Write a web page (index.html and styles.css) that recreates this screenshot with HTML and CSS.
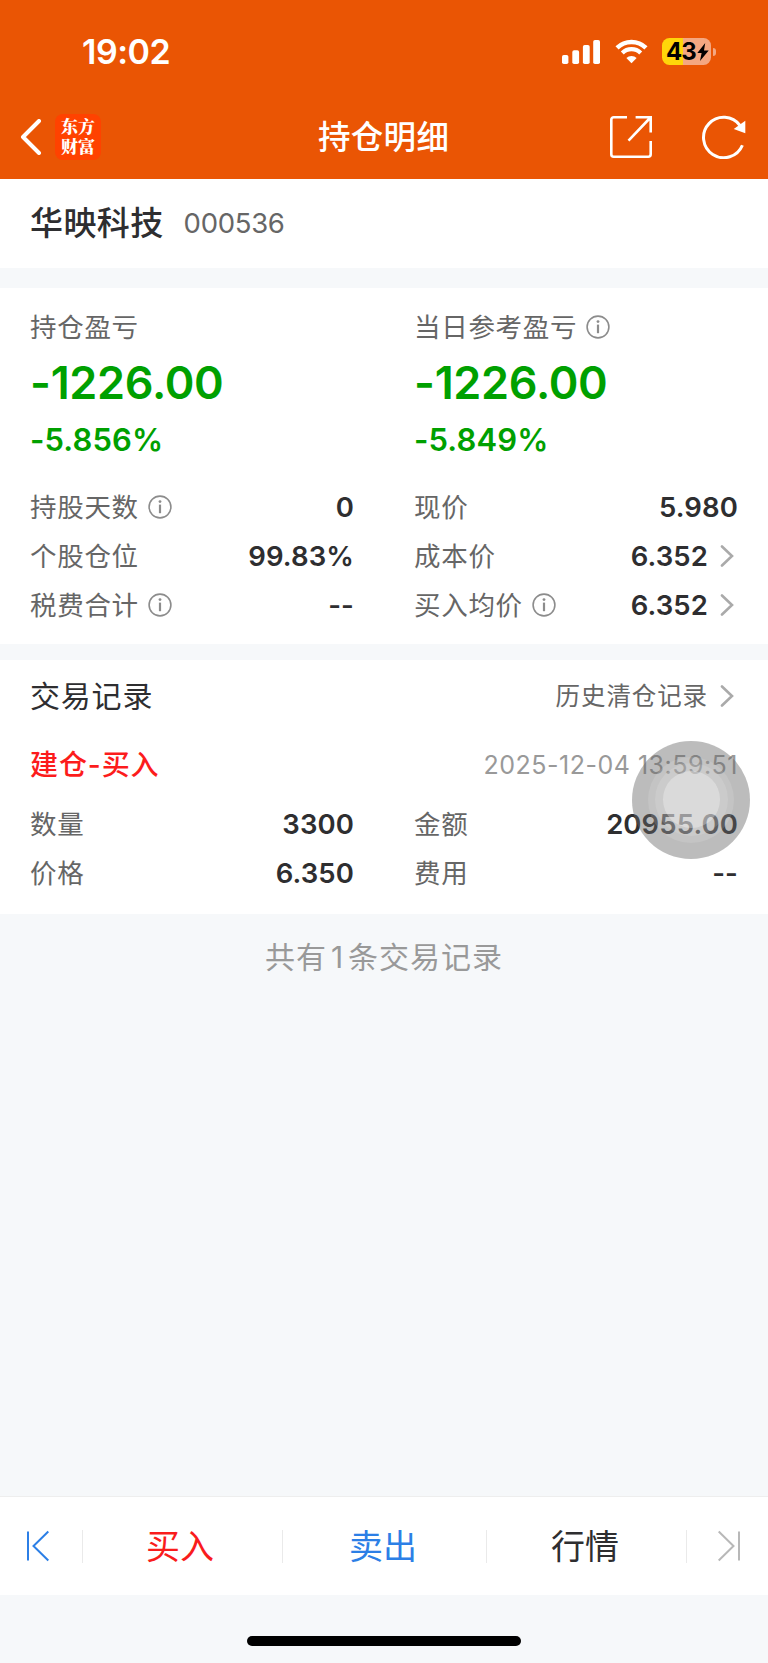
FILE: index.html
```html
<!DOCTYPE html>
<html lang="zh-CN">
<head>
<meta charset="utf-8">
<title>持仓明细</title>
<link rel="stylesheet" href="styles.css">
</head>
<body>
<svg class="defs" aria-hidden="true">
  <symbol id="info" viewBox="0 0 24 24"><circle cx="12" cy="12" r="10.9" fill="none" stroke="#8c8c8c" stroke-width="1.6"/><circle cx="12" cy="6.6" r="1.4" fill="#8c8c8c"/><path d="M12 9.6v8.6" stroke="#8c8c8c" stroke-width="2.2"/></symbol>
  <symbol id="chev" viewBox="0 0 14 22"><path d="M2 1.5L12 11L2 20.5" fill="none" stroke="#aaa" stroke-width="2.6" stroke-linecap="round"/></symbol>
</svg>
<header class="header">
  <div class="status">
    <span class="time">19:02</span>
    <div class="status-icons">
      <svg class="signal" viewBox="0 0 38 24" fill="#fff"><rect y="15" width="6.4" height="9" rx="1.8"/><rect x="10.3" y="10.3" width="6.8" height="13.7" rx="1.8"/><rect x="20.9" y="5" width="6.8" height="19" rx="1.8"/><rect x="31.2" width="6.8" height="24" rx="1.8"/></svg>
      <svg class="wifi" viewBox="0 0 34 25"><g fill="none" stroke="#fff"><path d="M2.1 8.7a21.3 21.3 0 0 1 29.8 0" stroke-width="4.6"/><path d="M7.5 14a13.6 13.6 0 0 1 19 0" stroke-width="4.4"/></g><path d="M17 24.5l-5.3-5.3a7.6 7.6 0 0 1 10.6 0z" fill="#fff"/></svg>
      <div class="battery"><span>43</span><svg class="bolt" viewBox="0 0 12 18"><path d="M8.2 0L.3 10h4.3L3 18 11.7 7.5H7z"/></svg></div>
      <i class="battery-cap"></i>
    </div>
  </div>
  <nav class="navbar">
    <svg class="back" viewBox="0 0 22 36"><path d="M19 2L3 18l16 16" fill="none" stroke="#fff" stroke-width="4" stroke-linecap="round" stroke-linejoin="round"/></svg>
    <div class="logo">东方<br>财富</div>
    <h1 class="title">持仓明细</h1>
    <svg class="share" viewBox="0 0 44 44" fill="none" stroke="#fff" stroke-width="2.6"><path d="M18 2.3H4.8a2.5 2.5 0 0 0-2.5 2.5v34.4a2.5 2.5 0 0 0 2.5 2.5h34.4a2.5 2.5 0 0 0 2.5-2.5V26M26.6 2.3h15.1v15.3M41 3L19.5 25.6"/></svg>
    <svg class="refresh" viewBox="0 0 46 44"><path d="M40.4 30.2A20.2 20.2 0 1 1 38 10.5" fill="none" stroke="#fff" stroke-width="3"/><path d="M43.3 5.7v12.6L31.7 14.1z" fill="#fff"/></svg>
  </nav>
</header>

<section class="stock"><span class="stock-name">华映科技</span><span class="stock-code">000536</span></section>

<section class="position">
  <div class="col">
    <div class="profit-label"><span class="label">持仓盈亏</span></div>
    <div class="profit">-1226.00</div>
    <div class="percent">-5.856%</div>
    <div class="row"><span class="label">持股天数</span><svg class="info"><use href="#info"/></svg><b class="value">0</b></div>
    <div class="row"><span class="label">个股仓位</span><b class="value">99.83%</b></div>
    <div class="row"><span class="label">税费合计</span><svg class="info"><use href="#info"/></svg><b class="value">--</b></div>
  </div>
  <div class="col">
    <div class="profit-label"><span class="label">当日参考盈亏</span><svg class="info"><use href="#info"/></svg></div>
    <div class="profit">-1226.00</div>
    <div class="percent">-5.849%</div>
    <div class="row"><span class="label">现价</span><b class="value">5.980</b></div>
    <div class="row"><span class="label">成本价</span><b class="value">6.352</b><svg class="chev"><use href="#chev"/></svg></div>
    <div class="row"><span class="label">买入均价</span><svg class="info"><use href="#info"/></svg><b class="value">6.352</b><svg class="chev"><use href="#chev"/></svg></div>
  </div>
</section>

<section class="records">
  <div class="records-head"><h2 class="records-title">交易记录</h2><span class="history">历史清仓记录</span><svg class="chev"><use href="#chev"/></svg></div>
  <div class="trade-head"><span class="trade-type">建仓-买入</span><time class="trade-time">2025-12-04 13:59:51</time></div>
  <div class="trade-grid">
    <div class="col">
      <div class="row"><span class="label">数量</span><b class="value">3300</b></div>
      <div class="row"><span class="label">价格</span><b class="value">6.350</b></div>
    </div>
    <div class="col">
      <div class="row"><span class="label">金额</span><b class="value">20955.00</b></div>
      <div class="row"><span class="label">费用</span><b class="value">--</b></div>
    </div>
  </div>
</section>
<p class="summary">共有<span class="count">1</span>条交易记录</p>

<footer class="toolbar">
  <div class="edge"><svg class="jump" viewBox="0 0 24 32" fill="none" stroke="#2c7fe6" stroke-width="2"><path d="M2 1.5v29M22.3 1.5L7.5 16l14.8 14.5"/></svg></div>
  <div class="action buy">买入</div>
  <div class="action sell">卖出</div>
  <div class="action quote">行情</div>
  <div class="edge last"><svg class="jump" viewBox="0 0 24 32" fill="none" stroke="#b8b8b8" stroke-width="2"><path d="M22 1.5v29M1.7 1.5L16.5 16L1.7 30.5"/></svg></div>
</footer>
<div class="home"><i></i></div>
<div class="assistive"><i><i><i></i></i></i></div>
</body>
</html>
```

FILE: styles.css
```css
* { box-sizing: border-box; }
body {
  margin: 0;
  width: 768px;
  height: 1663px;
  display: flex;
  flex-direction: column;
  position: relative;
  overflow: hidden;
  background: #f6f8fa;
  color: #2e2e30;
  font-family: Inter, "Noto Sans CJK SC", sans-serif;
  white-space: nowrap;
}
svg { display: block; flex: none; }
h1, h2, p { margin: 0; font-weight: inherit; }
.defs { position: absolute; width: 0; height: 0; }

.header { height: 179px; background: #ea5504; color: #fff; }
.status { height: 103px; padding: 0 57px 0 82px; display: flex; align-items: center; justify-content: space-between; }
.time { font-size: 34px; font-weight: 600; line-height: 40px; letter-spacing: -0.5px; }
.status-icons { display: flex; align-items: center; }
.signal { width: 38px; height: 24px; margin-right: 15px; }
.wifi { width: 33px; height: 25px; margin-right: 14px; }
.battery {
  width: 49px; height: 27px; border-radius: 7.5px; padding-left: 4px;
  display: flex; align-items: center;
  background: linear-gradient(90deg, #ffd60a 21px, #f4a781 21px);
  color: #000; font-size: 24px; font-weight: 700; letter-spacing: -0.9px;
}
.bolt { width: 12px; height: 18px; margin-left: 1px; }
.battery-cap { width: 3px; height: 8px; margin-left: 2px; margin-right: -5px; border-radius: 0 3px 3px 0; background: #f4a781; }

.navbar { height: 67px; display: flex; align-items: center; padding-left: 20px; }
.back { width: 22px; height: 36px; }
.logo {
  width: 46px; height: 46px; margin-left: 13px; padding-top: 2px; border-radius: 8px;
  background: #ff4200; text-align: center;
  font: 900 17px/20px "Noto Serif CJK SC", "Noto Sans CJK SC", serif;
}
.title { margin-left: 217px; width: 140px; padding-top: 2px; font-size: 32.5px; font-weight: 500; line-height: 44px; letter-spacing: .3px; }
.share { width: 44px; height: 44px; margin-left: 151px; }
.refresh { width: 46px; height: 44px; margin-left: 49px; }

.stock { height: 89px; padding: 0 30px 1px; background: #fff; display: flex; align-items: center; }
.stock-name { padding-bottom: 4px; font-size: 33px; font-weight: 500; letter-spacing: .4px; }
.stock-code { margin-left: 20px; font-size: 27.5px; color: #666; letter-spacing: -.3px; }

.position { margin-top: 20px; height: 356px; padding: 14px 30px 0; background: #fff; display: grid; grid-template-columns: 324px 324px; column-gap: 60px; }
.label { padding-bottom: 3px; color: #666; font-size: 26.5px; letter-spacing: .7px; }
.profit-label { height: 52px; padding-bottom: 2px; display: flex; align-items: center; }
.info { width: 24px; height: 24px; margin-left: 9px; }
.profit { height: 56px; line-height: 57px; font-size: 45px; font-weight: 600; letter-spacing: -.3px; color: #00a000; }
.percent { height: 58px; line-height: 59px; font-size: 31px; font-weight: 600; letter-spacing: .1px; color: #00a000; margin-bottom: 14.4px; }
.row { height: 49.2px; display: flex; align-items: center; }
.value { margin-left: auto; font-size: 27.5px; font-weight: 600; letter-spacing: .1px; }
.chev { width: 14px; height: 22px; margin: 0 4px 0 12px; }

.records { margin-top: 16px; height: 254px; padding: 0 30px; background: #fff; }
.records-head { height: 72px; display: flex; align-items: center; }
.records-title { padding-bottom: 4px; font-size: 30px; letter-spacing: .8px; }
.history { margin-left: auto; padding-bottom: 3px; color: #666; font-size: 24.5px; letter-spacing: .9px; }
.trade-head { height: 67.4px; padding-bottom: 2px; display: flex; align-items: center; justify-content: space-between; }
.trade-type { padding-bottom: 4px; color: #fc1c1c; font-size: 28px; font-weight: 500; letter-spacing: .9px; }
.trade-time { color: #999; font-size: 25px; letter-spacing: .5px; }
.trade-grid { display: grid; grid-template-columns: 324px 324px; column-gap: 60px; }
.summary { padding-top: 20px; height: 582px; text-align: center; font-size: 30px; line-height: 46px; letter-spacing: 1px; color: #999; }
.count { margin: 0 4px; }

.toolbar { height: 99px; border-top: 1px solid #eee; background: #fff; display: grid; grid-template-columns: 83px 200px 204px 200px 81px; align-items: center; }
.edge, .action { height: 33px; display: flex; align-items: center; justify-content: center; border-right: 1px solid #eaeaea; }
.edge { padding-right: 6px; }
.edge.last { border: 0; padding-right: 0; padding-left: 2px; }
.jump { width: 24px; height: 32px; }
.action { font-size: 34px; padding: 0 3px 4px 0; }
.buy { color: #f91c1c; padding-right: 5px; }
.sell { color: #2c7fe6; }
.home { padding-top: 41px; display: flex; justify-content: center; }
.home i { width: 274px; height: 10px; border-radius: 5px; background: #000; }

/* Floating assistive button above the page */
.assistive { position: absolute; left: 632px; top: 740.5px; width: 118px; height: 118px; border-radius: 50%; background: rgba(102,102,102,.44); display: flex; }
.assistive i { margin: auto; border-radius: 50%; display: flex; }
.assistive > i { width: 86px; height: 86px; background: rgba(255,255,255,.12); }
.assistive > i > i { width: 73px; height: 73px; background: rgba(255,255,255,.12); }
.assistive > i > i > i { width: 57px; height: 57px; background: rgba(255,255,255,.3); }
```
